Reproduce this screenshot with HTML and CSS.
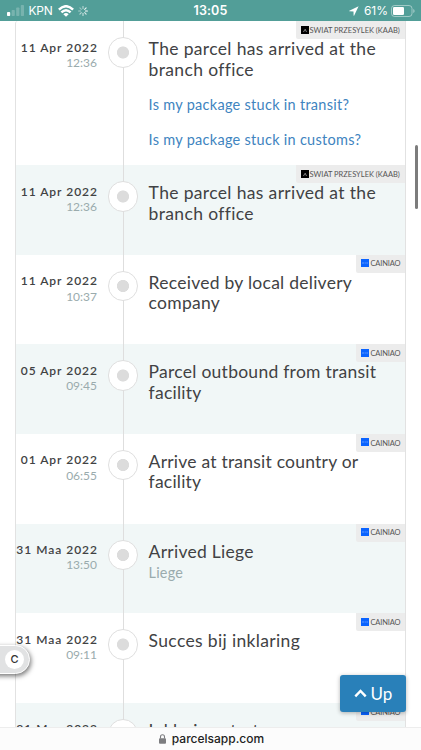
FILE: index.html
```
<!DOCTYPE html>
<html lang="en">
<head>
<meta charset="utf-8">
<meta name="viewport" content="width=device-width, initial-scale=1">
<title>Parcel tracking</title>
<link rel="stylesheet" href="styles.css">
</head>
<body>
<div class="phone">
  <header class="status">
    <div class="status-left">
      <svg class="signal" width="18" height="11" viewBox="0 0 18 11"><rect x="0" y="7" width="3.2" height="4" rx=".8" fill="#fff"/><g fill="#fff" opacity=".22"><rect x="4.6" y="5" width="3.2" height="6" rx=".8"/><rect x="9.2" y="2.5" width="3.2" height="8.5" rx=".8"/><rect x="13.8" y="0" width="3.2" height="11" rx=".8"/></g></svg>
      <span class="carrier">KPN</span>
      <svg class="wifi" width="16" height="12" viewBox="0 0 16 12" fill="none" stroke="#fff" stroke-width="2.5"><path d="M.9 4.6Q8-2.1 15.1 4.6"/><path d="M3.4 7.4Q8 3.1 12.6 7.4"/><path d="M8 11.8 5.3 9.2Q8 7 10.7 9.2Z" fill="#fff" stroke="none"/></svg>
      <svg class="spinner" width="10" height="10" viewBox="0 0 10 10" stroke="#fff" stroke-width="1.1" stroke-linecap="round"><path d="M5 .6v2" opacity=".6"/><path d="M8.1 1.9 6.7 3.3" opacity=".9"/><path d="M9.4 5h-2"/><path d="M8.1 8.1 6.7 6.7" opacity=".8"/><path d="M5 9.4v-2" opacity=".7"/><path d="M1.9 8.1l1.4-1.4" opacity=".6"/><path d="M.6 5h2" opacity=".5"/><path d="M1.9 1.9l1.4 1.4" opacity=".4"/></svg>
    </div>
    <div class="clock">13:05</div>
    <div class="status-right">
      <svg class="arrow" width="10" height="10" viewBox="0 0 10 10"><path d="M9.6.3.3 4.7c-.3.2-.2.6.1.6l4.1.1.1 4.1c0 .4.5.5.6.1Z" fill="#fff"/></svg>
      <span class="percent">61%</span>
      <svg class="battery" width="24" height="12" viewBox="0 0 24 12"><rect x=".5" y=".5" width="20.5" height="11" rx="3" fill="none" stroke="#fff" stroke-opacity=".45"/><rect x="2" y="2" width="11" height="8" rx="1.3" fill="#fff"/><path d="M22.3 4v4q1.3-.6 1.3-2t-1.3-2" fill="#fff" opacity=".5"/></svg>
    </div>
  </header>

  <main class="events">
    <article class="event event-tall">
      <div class="when"><div class="date">11 Apr 2022</div><div class="time">12:36</div></div>
      <div class="rail"><i class="node"></i></div>
      <div class="what"><h2>The parcel has arrived at the<br>branch office</h2><a>Is my package stuck in transit?</a><a>Is my package stuck in customs?</a></div>
      <div class="badge badge-swiat"><svg width="8" height="8" viewBox="0 0 8 8"><rect width="8" height="8" fill="#000"/><path d="M2 5.3h1.2l1-2.2.7 2.2H6" fill="none" stroke="#bbb" stroke-width=".6"/></svg><span>SWIAT PRZESYLEK (KAAB)</span></div>
    </article>
    <article class="event shaded">
      <div class="when"><div class="date">11 Apr 2022</div><div class="time">12:36</div></div>
      <div class="rail"><i class="node"></i></div>
      <div class="what"><h2>The parcel has arrived at the<br>branch office</h2></div>
      <div class="badge badge-swiat"><svg width="8" height="8" viewBox="0 0 8 8"><rect width="8" height="8" fill="#000"/><path d="M2 5.3h1.2l1-2.2.7 2.2H6" fill="none" stroke="#bbb" stroke-width=".6"/></svg><span>SWIAT PRZESYLEK (KAAB)</span></div>
    </article>
    <article class="event">
      <div class="when"><div class="date">11 Apr 2022</div><div class="time">10:37</div></div>
      <div class="rail"><i class="node"></i></div>
      <div class="what"><h2 class="snug">Received by local delivery<br>company</h2></div>
      <div class="badge"><svg width="8" height="8" viewBox="0 0 8 8"><rect width="8" height="8" fill="#0a63ff"/><path d="M1 4h2m.6 0h1.2m.6 0H7" stroke="#6ea4ff" stroke-width=".9"/></svg><span>CAINIAO</span></div>
    </article>
    <article class="event shaded">
      <div class="when"><div class="date">05 Apr 2022</div><div class="time">09:45</div></div>
      <div class="rail"><i class="node"></i></div>
      <div class="what"><h2 class="snug">Parcel outbound from transit<br>facility</h2></div>
      <div class="badge"><svg width="8" height="8" viewBox="0 0 8 8"><rect width="8" height="8" fill="#0a63ff"/><path d="M1 4h2m.6 0h1.2m.6 0H7" stroke="#6ea4ff" stroke-width=".9"/></svg><span>CAINIAO</span></div>
    </article>
    <article class="event">
      <div class="when"><div class="date">01 Apr 2022</div><div class="time">06:55</div></div>
      <div class="rail"><i class="node"></i></div>
      <div class="what"><h2 class="tight">Arrive at transit country or<br>facility</h2></div>
      <div class="badge"><svg width="8" height="8" viewBox="0 0 8 8"><rect width="8" height="8" fill="#0a63ff"/><path d="M1 4h2m.6 0h1.2m.6 0H7" stroke="#6ea4ff" stroke-width=".9"/></svg><span>CAINIAO</span></div>
    </article>
    <article class="event shaded">
      <div class="when"><div class="date">31 Maa 2022</div><div class="time">13:50</div></div>
      <div class="rail"><i class="node"></i></div>
      <div class="what"><h2 class="snug">Arrived Liege</h2><p>Liege</p></div>
      <div class="badge"><svg width="8" height="8" viewBox="0 0 8 8"><rect width="8" height="8" fill="#0a63ff"/><path d="M1 4h2m.6 0h1.2m.6 0H7" stroke="#6ea4ff" stroke-width=".9"/></svg><span>CAINIAO</span></div>
    </article>
    <article class="event">
      <div class="when"><div class="date">31 Maa 2022</div><div class="time">09:11</div></div>
      <div class="rail"><i class="node"></i></div>
      <div class="what"><h2>Succes bij inklaring</h2></div>
      <div class="badge"><svg width="8" height="8" viewBox="0 0 8 8"><rect width="8" height="8" fill="#0a63ff"/><path d="M1 4h2m.6 0h1.2m.6 0H7" stroke="#6ea4ff" stroke-width=".9"/></svg><span>CAINIAO</span></div>
    </article>
    <article class="event shaded">
      <div class="when"><div class="date">31 Maa 2022</div></div>
      <div class="rail"><i class="node"></i></div>
      <div class="what"><h2>Inklaring start</h2></div>
      <div class="badge"><svg width="8" height="8" viewBox="0 0 8 8"><rect width="8" height="8" fill="#0a63ff"/><path d="M1 4h2m.6 0h1.2m.6 0H7" stroke="#6ea4ff" stroke-width=".9"/></svg><span>CAINIAO</span></div>
    </article>
  </main>

  <footer class="address">
    <svg width="7" height="10" viewBox="0 0 7 10"><rect x="0" y="4.2" width="7" height="5.6" rx="1" fill="#7d7d80"/><path d="M1.5 4.6V2.8a2 2 0 0 1 4 0v1.8" fill="none" stroke="#7d7d80" stroke-width="1.1"/></svg>
    <span>parcelsapp.com</span>
  </footer>

  <i class="scrollbar"></i>
  <div class="tab"><span>C</span></div>
  <div class="up"><svg width="13" height="9" viewBox="0 0 13 9"><path d="M1.3 7.3 6.5 2l5.2 5.3" fill="none" stroke="#fff" stroke-width="2.4"/></svg><span>Up</span></div>
</div>
</body>
</html>
```
FILE: styles.css
```
* { box-sizing: border-box; }
body { margin: 0; background: #fff; font-family: Lato, "Open Sans", sans-serif; color: #414244; }
.phone { position: relative; width: 421px; height: 750px; overflow: hidden; display: flex; flex-direction: column; }

.status { flex: none; height: 21px; background: #529e98; color: #fff; display: grid; grid-template-columns: 1fr auto 1fr; align-items: center; font-family: Inter, "Liberation Sans", sans-serif; font-size: 12px; line-height: 21px; }
.status-left, .status-right { display: flex; align-items: center; }
.status-left { padding-left: 6.5px; }
.status-right { justify-content: flex-end; padding-right: 6px; }
.carrier { margin-left: 4px; letter-spacing: -.25px; }
.wifi { margin-left: 5px; }
.spinner { margin-left: 4px; }
.clock { font-weight: 600; font-size: 12.5px; letter-spacing: .1px; }
.arrow { margin-right: 5px; }
.percent { margin-right: 3px; }

.events { flex: 1; min-height: 0; overflow: hidden; margin: 0 15px; border: solid #e2e2e2; border-width: 0 1px; border-top-left-radius: 3px; }
.event { position: relative; height: 89.65px; display: grid; grid-template-columns: 82px 50px 1fr; }
.event-tall { height: 144px; }
.shaded { background: #f1f7f7; }
.when { padding-top: 18.5px; text-align: right; white-space: nowrap; direction: rtl; }
.when div { direction: ltr; }
.date { font-size: 12px; line-height: 16px; font-weight: 600; letter-spacing: .98px; }
.time { font-size: 12px; line-height: 15px; color: #9aabad; padding-right: 1px; margin-top: -.6px; }
.rail { display: flex; justify-content: center; padding-top: 16px; background: linear-gradient(#dedede, #dedede) 25px 0 / 1px 100% no-repeat; }
.node { width: 30.5px; height: 30.5px; border: 1px solid #dfdfdf; border-radius: 50%; background: radial-gradient(circle, #dcdcdc 5.7px, #fff 6.4px); }
.what { padding-top: 18px; padding-left: .6px; white-space: nowrap; }
h2 { margin: 0; font-size: 17.5px; line-height: 20.5px; font-weight: 400; letter-spacing: .35px; }
h2.snug { letter-spacing: .26px; }
h2.tight { letter-spacing: .22px; }
.what p { margin: 1px 0 0; font-size: 14.4px; line-height: 20px; color: #9aabad; letter-spacing: .2px; }
.what a { display: block; margin-top: 15px; font-size: 14.5px; line-height: 19.5px; color: #4084c0; letter-spacing: .28px; }
.what h2 + a { margin-top: 15.4px; }
.badge { position: absolute; top: 0; right: 0; width: 49px; height: 18px; padding-left: 5px; display: flex; align-items: center; gap: 1.5px; background: #ececec; border-bottom-left-radius: 2px; font-size: 7.5px; line-height: 18px; color: #555; white-space: nowrap; letter-spacing: -.15px; }
.badge svg { flex: none; position: relative; top: -.5px; }
.badge span { padding-top: 1.4px; }
.badge-swiat { width: 109px; letter-spacing: 0; gap: .5px; }

.address { flex: none; height: 23px; border-top: 1px solid #ededed; background: #fcfcfc; display: flex; justify-content: center; align-items: center; gap: 6px; padding-left: 2px; font: 500 12px/22px Inter, "Liberation Sans", sans-serif; color: #222; }
.scrollbar { position: absolute; left: 415px; top: 145px; width: 3px; height: 64px; border-radius: 2px; background: #7c7c7c; }
.tab { position: absolute; left: -10px; top: 645px; width: 40px; height: 29px; border: 1px solid #fff; border-radius: 0 15px 15px 0; background: #e1e2e3; box-shadow: 1px 2px 5px rgba(0,0,0,.55); display: flex; align-items: center; justify-content: flex-end; padding-right: 5px; }
.tab span { width: 19px; height: 19px; border-radius: 50%; background: #fff; font: 500 11px/19px Inter, sans-serif; text-align: center; color: #333; }
.up { position: absolute; left: 340px; top: 675px; width: 66px; height: 37px; border-radius: 3px; background: #2980b9; box-shadow: 0 1px 4px rgba(0,0,0,.3); display: flex; align-items: center; justify-content: center; gap: 4px; color: #fff; font-size: 17px; }
```
